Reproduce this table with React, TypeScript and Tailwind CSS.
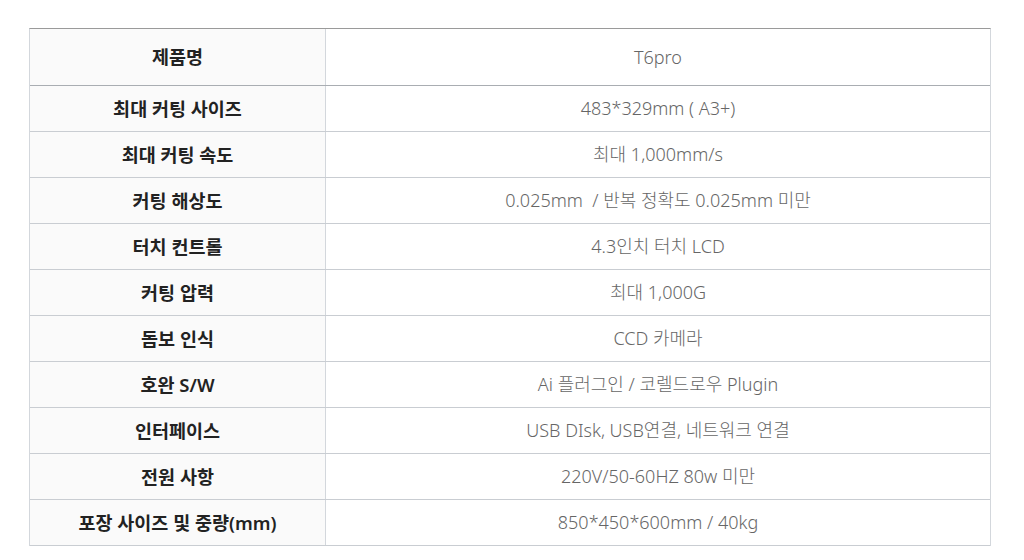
const ROWS: [string, string][] = [
  ["제품명", "T6pro"],
  ["최대 커팅 사이즈", "483*329mm ( A3+)"],
  ["최대 커팅 속도", "최대 1,000mm/s"],
  ["커팅 해상도", "0.025mm  / 반복 정확도 0.025mm 미만"],
  ["터치 컨트롤", "4.3인치 터치 LCD"],
  ["커팅 압력", "최대 1,000G"],
  ["돔보 인식", "CCD 카메라"],
  ["호완 S/W", "Ai 플러그인 / 코렐드로우 Plugin"],
  ["인터페이스", "USB DIsk, USB연결, 네트워크 연결"],
  ["전원 사항", "220V/50-60HZ 80w 미만"],
  ["포장 사이즈 및 중량(mm)", "850*450*600mm / 40kg"],
];

export default function App() {
  return (
    <div className="w-[1024px] h-[560px] bg-white pt-[28px] pl-[29px] font-['Noto_Sans','Noto_Sans_CJK_KR',sans-serif]">
      <div className="w-[962px] border-t border-t-[#9a9a9a] border-l border-r border-[#d3d7dc]">
        {ROWS.map(([label, value], i) => (
          <div
            key={label}
            className={`grid grid-cols-[296px_1fr] border-b ${i === 0 ? "h-[57px] border-[#a9adb2]" : "h-[46px] border-[#c9cdd2]"}`}
          >
            <div className="flex items-center justify-center bg-[#fafafa] border-r border-[#d3d7dc] text-[18.5px] font-semibold text-[#222]">
              {label}
            </div>
            <div className="flex items-center justify-center text-[18px] font-light text-[#666] whitespace-pre">
              {value}
            </div>
          </div>
        ))}
      </div>
    </div>
  );
}
